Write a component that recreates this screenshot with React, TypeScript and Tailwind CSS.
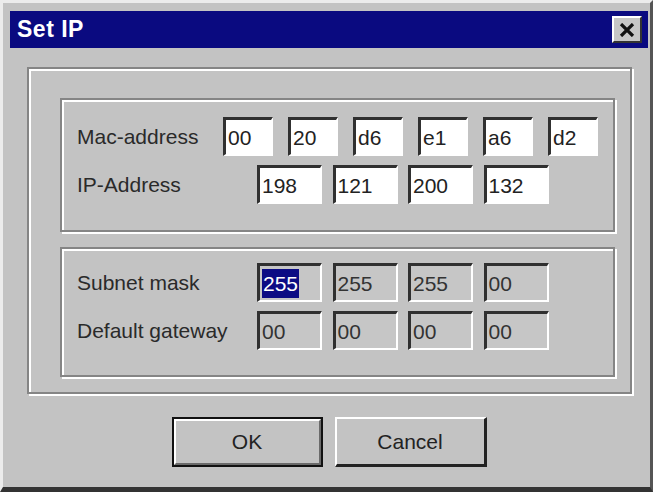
const FIELD =
  "flex items-center h-[39px] border-t-[3px] border-l-[3px] border-t-[#303030] border-l-[#303030] border-b-2 border-r-2 border-b-white border-r-white pl-[2px] text-[21px] leading-none text-[#222]";

const ETCHED = "border-2 border-[#858585] shadow-[inset_2px_2px_0_#fff,2px_2px_0_#fff]";

function Field({ value, width, disabled, selected }: { value: string; width: string; disabled?: boolean; selected?: boolean }) {
  return (
    <div className={`${FIELD} ${width} ${disabled ? "bg-[#c6c6c6] text-[#333]" : "bg-white"}`}>
      {selected ? (
        <span className="bg-[#0c0c84] text-white leading-[29px] px-[1px]">{value}</span>
      ) : (
        <span>{value}</span>
      )}
    </div>
  );
}

function Row({ label, labelWidth, gap, children }: { label: string; labelWidth: string; gap: string; children: React.ReactNode }) {
  return (
    <div className="flex items-center">
      <div className={`${labelWidth} text-[21px] text-[#2a2a2a] leading-none`}>{label}</div>
      <div className={`flex ${gap}`}>{children}</div>
    </div>
  );
}

export default function App() {
  const mac = ["00", "20", "d6", "e1", "a6", "d2"];
  const ip = ["198", "121", "200", "132"];
  const subnet = ["255", "255", "255", "00"];
  const gateway = ["00", "00", "00", "00"];

  return (
    <div className="w-[653px] h-[492px] bg-[#c3c3c3] border-t-[3px] border-l-[3px] border-t-[#ececec] border-l-[#ececec] border-r-[3px] border-r-[#555] border-b-[5px] border-b-[#333] pt-[8px] pl-[7px] pr-[2px] flex flex-col font-['Liberation_Sans',Arial,sans-serif]">
      {/* title bar */}
      <div className="h-[37px] bg-[#0a0a80] flex items-center justify-between pl-[7px] pr-[6px]">
        <span className="text-white font-bold text-[23px] tracking-[0.5px]">Set IP</span>
        <button className="w-[30px] h-[27px] bg-[#c6c6c6] border-t-2 border-l-2 border-t-white border-l-white border-b-2 border-r-2 border-b-[#333] border-r-[#333] flex items-center justify-center">
          <svg width="16" height="14" viewBox="0 0 16 14">
            <path d="M2 1 L14 13 M14 1 L2 13" stroke="#111" strokeWidth="3.2" />
          </svg>
        </button>
      </div>

      {/* body */}
      <div className={`mt-[19px] ml-[17px] mr-[16px] h-[327px] ${ETCHED} pt-[29px] pl-[31px] pr-[15px] flex flex-col gap-[15px]`}>
        <div className={`h-[134px] ${ETCHED} pt-[17px] pl-[15px] flex flex-col gap-[9px]`}>
          <Row label="Mac-address" labelWidth="w-[146px]" gap="gap-[15px]">
            {mac.map((v, i) => (
              <Field key={i} value={v} width="w-[50px]" />
            ))}
          </Row>
          <Row label="IP-Address" labelWidth="w-[180px]" gap="gap-[10.5px]">
            {ip.map((v, i) => (
              <Field key={i} value={v} width="w-[65px]" />
            ))}
          </Row>
        </div>
        <div className={`h-[130px] ${ETCHED} pt-[14px] pl-[15px] flex flex-col gap-[9px]`}>
          <Row label="Subnet mask" labelWidth="w-[180px]" gap="gap-[10.5px]">
            {subnet.map((v, i) => (
              <Field key={i} value={v} width="w-[65px]" disabled selected={i === 0} />
            ))}
          </Row>
          <Row label="Default gateway" labelWidth="w-[180px]" gap="gap-[10.5px]">
            {gateway.map((v, i) => (
              <Field key={i} value={v} width="w-[65px]" disabled />
            ))}
          </Row>
        </div>
      </div>

      {/* buttons */}
      <div className="mt-[23px] flex justify-center gap-[12px]">
        <button className="w-[151px] h-[50px] border-2 border-[#111] bg-[#c3c3c3]">
          <div className="w-full h-full border-t-2 border-l-2 border-t-white border-l-white border-b-2 border-r-2 border-b-[#6a6a6a] border-r-[#6a6a6a] flex items-center justify-center text-[21px] text-[#222]">
            OK
          </div>
        </button>
        <button className="w-[152px] h-[50px] border-t-2 border-l-2 border-t-white border-l-white border-b-[3px] border-r-[3px] border-b-[#222] border-r-[#222] bg-[#c3c3c3] flex items-center justify-center text-[21px] text-[#222]">
          Cancel
        </button>
      </div>
    </div>
  );
}
